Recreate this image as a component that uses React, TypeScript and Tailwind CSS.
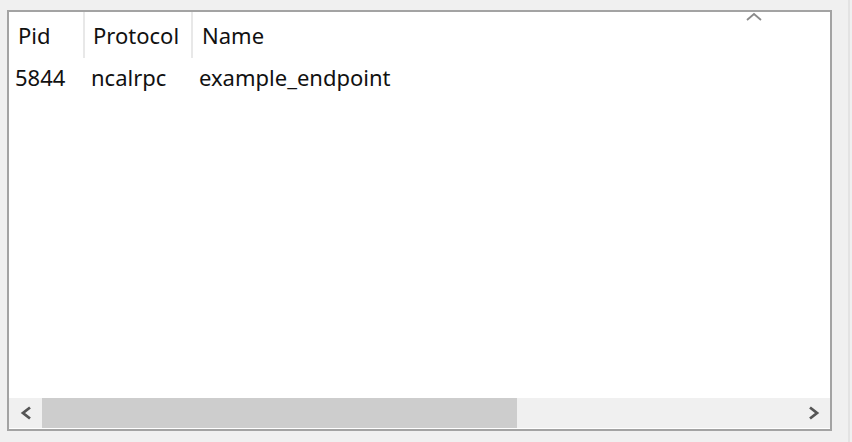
import React from "react";

export default function App() {
  const font = { fontFamily: '"Noto Sans", "Open Sans", sans-serif' };
  return (
    <div className="w-[852px] h-[442px] bg-[#f0f0f0] relative overflow-hidden" style={font}>
      <div className="absolute left-[848px] top-0 w-[2px] h-[442px] bg-[#e3e3e3]" />
      <div className="absolute left-[7px] top-[10px] w-[825px] h-[421px] border-2 border-[#a3a3a3] bg-white flex flex-col">
        <div className="relative flex h-[46px] text-[22px] text-[#111111] leading-none">
          <div className="w-[76px] border-r-2 border-[#e8e8e8] pl-[9px] pt-[12px]">Pid</div>
          <div className="w-[108px] border-r-2 border-[#e8e8e8] pl-[8px] pt-[12px]">Protocol</div>
          <div className="flex-1 pl-[9px] pt-[12px]">Name</div>
          <svg className="absolute left-[736px] top-[0px]" width="18" height="10" viewBox="0 0 18 10">
            <path d="M2 8 L9 2 L16 8" fill="none" stroke="#8a8a8a" strokeWidth="1.8" />
          </svg>
        </div>
        <div className="flex text-[22px] text-[#111111] leading-none pt-[8px]">
          <div className="w-[76px] pl-[6px]">5844</div>
          <div className="w-[108px] pl-[6px]">ncalrpc</div>
          <div className="flex-1 pl-[6px]">example_endpoint</div>
        </div>
        <div className="flex-1" />
        <div className="flex h-[30px] bg-[#f0f0f0] items-stretch mb-[1px]">
          <div className="w-[33px] flex items-center justify-center">
            <svg width="14" height="16" viewBox="0 0 14 16">
              <path d="M11 2.5 L4 8 L11 13.5" fill="none" stroke="#555555" strokeWidth="2.8" />
            </svg>
          </div>
          <div className="w-[475px] bg-[#cdcdcd]" />
          <div className="flex-1" />
          <div className="w-[33px] flex items-center justify-center">
            <svg width="14" height="16" viewBox="0 0 14 16">
              <path d="M3 2.5 L10 8 L3 13.5" fill="none" stroke="#555555" strokeWidth="2.8" />
            </svg>
          </div>
        </div>
      </div>
    </div>
  );
}
